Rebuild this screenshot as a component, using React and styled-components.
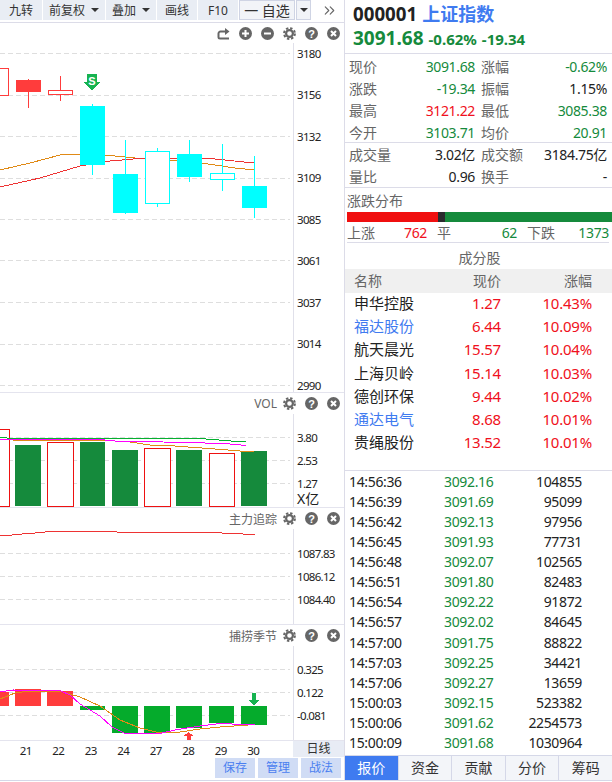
import React from "react";
import styled, { createGlobalStyle } from "styled-components";
import { ChevronsRight } from "lucide-react";

const GlobalStyle = createGlobalStyle`
    html, body {
        margin: 0;
        padding: 0;
        background: #fff;
    }
    body {
        font-family: "Noto Sans", "Noto Sans CJK SC", sans-serif;
        color: #222;
    }
    * {
        box-sizing: border-box;
    }
`;

const GREEN = "#158a3c";
const RED = "#f01020";
const BLUE = "#3f7bf0";
const LINE = "#dcdce8";

const Page = styled.div`
    display: flex;
    width: 612px;
    height: 782px;
    overflow: hidden;
`;

const LeftColumn = styled.div`
    display: flex;
    flex-direction: column;
    width: 345px;
    height: 781px;
    border-right: 1px solid ${LINE};
    border-bottom: 1px solid #d5d8e8;
`;

const Toolbar = styled.div`
    display: flex;
    align-items: flex-start;
    gap: 1px;
    height: 23px;
    flex: none;
    border-bottom: 1px solid ${LINE};
`;

const ToolButton = styled.div`
    display: flex;
    align-items: center;
    justify-content: center;
    gap: 6px;
    width: ${({ $w }) => $w}px;
    height: 20px;
    background: ${({ $outlined }) => ($outlined ? "#f2f4f8" : "#e9edf4")};
    border: ${({ $outlined }) => ($outlined ? "1px solid #cfd4e4" : "none")};
    font-size: ${({ $outlined }) => ($outlined ? 14 : 12)}px;
    color: #333;
    white-space: nowrap;
`;

const Caret = styled.span`
    width: 0;
    height: 0;
    border-left: 4px solid transparent;
    border-right: 4px solid transparent;
    border-top: 4px solid #333;
`;

const MoreButton = styled.div`
    display: flex;
    align-items: center;
    height: 20px;
    margin-left: 9px;
    color: #666;
`;

const Pane = styled.div`
    display: flex;
    flex-direction: column;
    height: ${({ $h }) => $h}px;
    flex: none;
    border-bottom: 1px solid #e4e4ee;
`;

const PaneHeader = styled.div`
    display: flex;
    align-items: center;
    justify-content: flex-end;
    gap: 9px;
    height: ${({ $h }) => $h}px;
    flex: none;
    padding-right: 4px;
`;

const PaneLabel = styled.span`
    font-size: 12px;
    color: #666;
    margin-right: -3px;
`;

const PaneBody = styled.div`
    display: flex;
    flex: 1;
    min-height: 0;
`;

const Plot = styled.svg`
    display: block;
    width: 293px;
    height: 100%;
    flex: none;
    shape-rendering: crispEdges;
`;

const Axis = styled.div`
    flex: 1;
    border-left: 1px solid #e0e0ea;
    padding-left: 3px;
    padding-top: ${({ $pad }) => $pad}px;
`;

const AxisLabel = styled.div`
    height: 14px;
    line-height: 14px;
    margin-bottom: ${({ $step }) => $step - 14}px;
    font-size: 11.5px;
    letter-spacing: -0.7px;
    color: #222;
    white-space: nowrap;
`;

const AxisUnit = styled.div`
    font-size: 14px;
    line-height: 14px;
    margin-top: -7.5px;
    color: #222;
`;

const DateStrip = styled.div`
    display: flex;
    height: 16px;
    flex: none;
`;

const DateTrack = styled.div`
    width: 293px;
    overflow: hidden;
`;

const DateRow = styled.div`
    display: flex;
    margin-left: -23px;
`;

const DateCell = styled.span`
    width: 32.5px;
    flex: none;
    text-align: center;
    font-size: 11.5px;
    line-height: 20px;
    letter-spacing: -0.6px;
    color: #222;
`;

const PeriodTag = styled.div`
    flex: 1;
    background: #e8ecf5;
    text-align: center;
    font-size: 12px;
    line-height: 16px;
    color: #333;
`;

const ActionRow = styled.div`
    display: flex;
    justify-content: flex-end;
    gap: 3px;
    padding: 1px 3px 0 0;
`;

const ActionButton = styled.div`
    width: 40px;
    height: 20px;
    background: #d0dcf5;
    color: #4a80f0;
    font-size: 12px;
    line-height: 20px;
    text-align: center;
`;

const RightColumn = styled.div`
    display: flex;
    flex-direction: column;
    width: 267px;
    flex: none;
`;

const Quote = styled.div`
    height: 54px;
    padding: 1px 0 0 8px;
    border-bottom: 1px solid ${LINE};
`;

const QuoteTitle = styled.div`
    display: flex;
    align-items: center;
    gap: 5px;
    height: 24px;
    font-size: 18.7px;
    font-weight: 700;
`;

const QuoteName = styled.span`
    font-size: 18px;
    color: ${BLUE};
`;

const QuotePrice = styled.div`
    display: flex;
    align-items: baseline;
    gap: 5px;
    color: ${GREEN};
    font-weight: 700;
    font-size: 15px;
    line-height: 26px;
`;

const QuoteBig = styled.span`
    font-size: 19px;
`;

const StatBlock = styled.div`
    height: ${({ $h }) => $h}px;
    padding-top: ${({ $pad }) => $pad}px;
    border-bottom: 1px solid ${LINE};
`;

const StatRow = styled.div`
    display: grid;
    grid-template-columns: 54px 66px 54px 66px;
    column-gap: 6px;
    padding-left: 4px;
    height: 22px;
    line-height: 22px;
    font-size: 14px;
`;

const StatLabel = styled.span`
    color: #666;
    white-space: nowrap;
`;

const StatValue = styled.span`
    text-align: right;
    white-space: nowrap;
    letter-spacing: -0.35px;
    color: ${({ $color }) => $color || "#222"};
`;

const Breadth = styled.div`
    height: 56px;
    padding: 3px 3px 0 2px;
`;

const BreadthTitle = styled.div`
    font-size: 14px;
    line-height: 20px;
    color: #666;
`;

const BreadthBar = styled.div`
    display: flex;
    height: 10px;
    margin: 1px -3px 0 0;
`;

const BreadthPart = styled.div`
    width: ${({ $w }) => $w}px;
    flex: ${({ $grow }) => ($grow ? 1 : "none")};
    background: ${({ $color }) => $color};
`;

const BreadthRow = styled.div`
    display: grid;
    grid-template-columns: 80px 80px 82px;
    column-gap: 10px;
    height: 21px;
    line-height: 22px;
    font-size: 14px;
    border-bottom: 1px solid ${LINE};
`;

const BreadthCell = styled.div`
    display: flex;
    justify-content: space-between;
`;

const SectionTitle = styled.div`
    height: 25px;
    line-height: 28px;
    padding-left: 2px;
    text-align: center;
    font-size: 14px;
    color: #666;
`;

const ConstRow = styled.div`
    display: grid;
    grid-template-columns: 96px 51px 91px;
    height: ${({ $head }) => ($head ? 24 : 23.2)}px;
    line-height: ${({ $head }) => ($head ? 23 : 20)}px;
    padding-left: 9px;
    font-size: ${({ $head }) => ($head ? 14 : 15)}px;
    background: ${({ $head }) => ($head ? "#f0f0f0" : "transparent")};
    color: ${({ $head }) => ($head ? "#666" : "#222")};
`;

const ConstName = styled.span`
    color: ${({ $linked }) => ($linked ? BLUE : "inherit")};
    white-space: nowrap;
`;

const ConstNum = styled.span`
    text-align: right;
    letter-spacing: ${({ $head }) => ($head ? 0 : "-0.2px")};
    color: ${({ $head }) => ($head ? "inherit" : RED)};
`;

const ConstTable = styled.div`
    height: 202px;
    border-bottom: 1px solid ${LINE};
`;

const TickList = styled.div`
    flex: 1;
    min-height: 0;
    padding: 1px 0 0 4px;
`;

const TickRow = styled.div`
    display: grid;
    grid-template-columns: 95px 60px 78px;
    height: 20.07px;
    line-height: 20px;
    font-size: 14px;
    letter-spacing: -0.35px;
`;

const TickPrice = styled.span`
    color: ${GREEN};
`;

const TickVolume = styled.span`
    text-align: right;
`;

const Tabs = styled.div`
    display: flex;
    height: 26px;
    flex: none;
    margin-bottom: 1px;
    border-top: 1px solid #d5d8e8;
    border-bottom: 1px solid #d5d8e8;
`;

const Tab = styled.div`
    flex: 1;
    text-align: center;
    font-size: 14px;
    line-height: 24px;
    background: ${({ $active }) => ($active ? BLUE : "#f3f5f9")};
    color: ${({ $active }) => ($active ? "#fff" : "#333")};
    border-right: 1px solid #d5d8e8;
    &:last-child {
        border-right: none;
    }
`;

const ICON = "#666";

const Disc = ({ children }) => (
    <svg width="13" height="13" viewBox="0 0 13 13">
        <circle cx="6.5" cy="6.5" r="6.5" fill={ICON} />
        {children}
    </svg>
);

const PlusIcon = () => (
    <Disc>
        <path d="M3 6.5h7M6.5 3v7" stroke="#fff" strokeWidth="2" />
    </Disc>
);

const MinusIcon = () => (
    <Disc>
        <path d="M3 6.5h7" stroke="#fff" strokeWidth="2" />
    </Disc>
);

const HelpIcon = () => (
    <Disc>
        <text x="6.5" y="10.5" textAnchor="middle" fontSize="11" fontWeight="700" fill="#fff" fontFamily="Liberation Sans">
            ?
        </text>
    </Disc>
);

const CloseIcon = () => (
    <Disc>
        <path d="M4 4l5 5M9 4l-5 5" stroke="#fff" strokeWidth="2" />
    </Disc>
);

const GearIcon = () => (
    <svg width="13" height="13" viewBox="0 0 13 13">
        <circle cx="6.5" cy="6.5" r="3.4" fill="none" stroke={ICON} strokeWidth="2.2" />
        <circle cx="6.5" cy="6.5" r="5.4" fill="none" stroke={ICON} strokeWidth="2" strokeDasharray="2.4 1.84" />
    </svg>
);

const ShareIcon = () => (
    <svg width="13" height="13" viewBox="0 0 13 13">
        <path d="M12 11.5H3a1.5 1.5 0 0 1-1.5-1.5V6.5A2 2 0 0 1 3.5 4.5H8" fill="none" stroke={ICON} strokeWidth="2" />
        <path d="M8 1l4.5 3.5L8 8z" fill={ICON} />
    </svg>
);

const PaneIcons = () => (
    <>
        <GearIcon />
        <HelpIcon />
        <CloseIcon />
    </>
);

const Grid = ({ ys }) =>
    ys.map((y) => <line key={y} x1="0" x2="290" y1={y} y2={y} stroke="#dedede" strokeWidth="1" strokeDasharray="5 3" />);

const Poly = ({ points, color, width = 1 }) => (
    <polyline points={points.map((p) => p.join(",")).join(" ")} fill="none" stroke={color} strokeWidth={width} />
);

const CYAN = "#00ffff";
const CANDLE_RED = "#ff3c3c";

// x, width, body top, body bottom, wick top, wick bottom
const candles = [
    { x: -16, w: 24, t: 68.5, b: 95.5, hollow: true, c: CANDLE_RED },
    { x: 16, w: 25, t: 80, b: 92, wt: 79, wb: 108, c: CANDLE_RED },
    { x: 48.5, w: 24, t: 90.5, b: 94, wt: 76, wb: 101, hollow: true, c: CANDLE_RED },
    { x: 80, w: 25, t: 106, b: 165, wt: 104, wb: 175, c: CYAN },
    { x: 113, w: 25, t: 174, b: 213, wt: 140, wb: 214, c: CYAN },
    { x: 145.5, w: 24, t: 151.5, b: 203, wt: 148, wb: 207, hollow: true, c: CYAN },
    { x: 177, w: 25, t: 154, b: 177, wt: 140, wb: 182, c: CYAN },
    { x: 210.5, w: 24, t: 173.5, b: 179, wt: 144, wb: 191, hollow: true, c: CYAN },
    { x: 242, w: 25, t: 186, b: 208, wt: 156, wb: 218, c: CYAN },
];

const Candle = ({ x, w, t, b, wt, wb, hollow, c }) => {
    const mid = x + w / 2;
    return (
        <g>
            {wt !== undefined && <line x1={mid} x2={mid} y1={wt} y2={wb} stroke={c} strokeWidth="1" />}
            <rect x={x} y={t} width={w} height={b - t} fill={hollow ? "#fff" : c} stroke={hollow ? c : "none"} strokeWidth="1" />
        </g>
    );
};

const volumes = [
    { x: -16, w: 25, t: 429.5, hollow: true },
    { x: 15, w: 26, t: 445 },
    { x: 47.5, w: 26, t: 442.5, hollow: true },
    { x: 80, w: 25, t: 442 },
    { x: 112, w: 26, t: 450 },
    { x: 144.5, w: 26, t: 448.5, hollow: true },
    { x: 176, w: 26, t: 450 },
    { x: 209.5, w: 25, t: 453.5, hollow: true },
    { x: 241, w: 26, t: 451 },
];

const seasonBars = [
    { x: -16, w: 25, t: 691.5, b: 706, c: CANDLE_RED },
    { x: 15, w: 26, t: 689, b: 706, c: CANDLE_RED },
    { x: 47, w: 26, t: 691, b: 706, c: CANDLE_RED },
    { x: 80, w: 25, t: 706, b: 710, c: "#05ab2c" },
    { x: 112, w: 26, t: 706, b: 733, c: "#05ab2c" },
    { x: 144, w: 26, t: 706, b: 733, c: "#05ab2c" },
    { x: 176, w: 26, t: 706, b: 728, c: "#05ab2c" },
    { x: 209, w: 25, t: 706, b: 723, c: "#05ab2c" },
    { x: 241, w: 26, t: 706, b: 725, c: "#05ab2c" },
];

const stats = [
    ["现价", "3091.68", GREEN, "涨幅", "-0.62%", GREEN],
    ["涨跌", "-19.34", GREEN, "振幅", "1.15%", "#222"],
    ["最高", "3121.22", RED, "最低", "3085.38", GREEN],
    ["今开", "3103.71", GREEN, "均价", "20.91", GREEN],
];

const constituents = [
    ["申华控股", "1.27", "10.43%"],
    ["福达股份", "6.44", "10.09%", true],
    ["航天晨光", "15.57", "10.04%"],
    ["上海贝岭", "15.14", "10.03%"],
    ["德创环保", "9.44", "10.02%"],
    ["通达电气", "8.68", "10.01%", true],
    ["贵绳股份", "13.52", "10.01%"],
];

const ticks = [
    ["14:56:36", "3092.16", "104855"],
    ["14:56:39", "3091.69", "95099"],
    ["14:56:42", "3092.13", "97956"],
    ["14:56:45", "3091.93", "77731"],
    ["14:56:48", "3092.07", "102565"],
    ["14:56:51", "3091.80", "82483"],
    ["14:56:54", "3092.22", "91872"],
    ["14:56:57", "3092.02", "84645"],
    ["14:57:00", "3091.75", "88822"],
    ["14:57:03", "3092.25", "34421"],
    ["14:57:06", "3092.27", "13659"],
    ["15:00:03", "3092.15", "523382"],
    ["15:00:06", "3091.62", "2254573"],
    ["15:00:09", "3091.68", "1030964"],
];

const App = () => (
    <Page>
        <GlobalStyle />
        <LeftColumn>
            <Toolbar>
                <ToolButton $w={42}>九转</ToolButton>
                <ToolButton $w={62}>前复权<Caret /></ToolButton>
                <ToolButton $w={50}>叠加<Caret /></ToolButton>
                <ToolButton $w={40}>画线</ToolButton>
                <ToolButton $w={40}>F10</ToolButton>
                <ToolButton $w={56} $outlined>一 自选</ToolButton>
                <ToolButton $w={15} $outlined><Caret /></ToolButton>
                <MoreButton><ChevronsRight size={17} strokeWidth={1.6} /></MoreButton>
            </Toolbar>

            <Pane $h={370}>
                <PaneHeader $h={20}>
                    <ShareIcon />
                    <PlusIcon />
                    <MinusIcon />
                    <PaneIcons />
                </PaneHeader>
                <PaneBody>
                    <Plot viewBox="0 43 293 349">
                        <Grid ys={[53.5, 95.5, 136.5, 178.5, 219.5, 260.5, 302.5, 344.5, 385.5]} />
                        <Poly color="#e08a16" points={[[0, 170], [30, 163], [60, 155], [80, 154], [105, 155], [135, 158], [150, 159], [170, 160], [205, 163.5], [235, 168], [254, 170]]} />
                        <Poly color="#ee3333" points={[[0, 187], [40, 178], [80, 166], [110, 161], [145, 158], [170, 158], [210, 158.5], [254, 163]]} />
                        {candles.map((c) => <Candle key={c.x} {...c} />)}
                        <path d="M87 74h10v8h4l-9 8-9-8h4z" fill="#16b350" />
                        <text x="92" y="84.5" textAnchor="middle" fontSize="11" fontWeight="700" fill="#fff" fontFamily="Liberation Sans">S</text>
                    </Plot>
                    <Axis $pad={3.5}>
                        {["3180", "3156", "3132", "3109", "3085", "3061", "3037", "3014", "2990"].map((v) => (
                            <AxisLabel key={v} $step={41.5}>{v}</AxisLabel>
                        ))}
                    </Axis>
                </PaneBody>
            </Pane>

            <Pane $h={115}>
                <PaneHeader $h={21}>
                    <PaneLabel>VOL</PaneLabel>
                    <PaneIcons />
                </PaneHeader>
                <PaneBody>
                    <Plot viewBox="0 414 293 93">
                        <Grid ys={[437.5, 460.5, 483.5]} />
                        {volumes.map((v) => (
                            <rect key={v.x} x={v.x} y={v.t} width={v.w} height={506 - v.t} fill={v.hollow ? "#fff" : GREEN} stroke={v.hollow ? "#ee1111" : "none"} strokeWidth="1" />
                        ))}
                        <Poly color="#05b030" points={[[0, 437.5], [13, 438.5], [100, 438.5], [205, 438.5], [207, 439.5], [230, 440.5], [232, 441.5], [246, 441.5]]} />
                        <Poly color="#e08a16" points={[[13, 440.5], [100, 440], [130, 442], [150, 445], [175, 446], [195, 447.5], [215, 449], [240, 451], [254, 452]]} />
                        <Poly color="#ff00ff" points={[[0, 439.5], [13, 440], [100, 439.5], [115, 441], [140, 441], [175, 442.5], [205, 443], [230, 444], [246, 445.5]]} />
                    </Plot>
                    <Axis $pad={16.5}>
                        {["3.80", "2.53", "1.27"].map((v) => (
                            <AxisLabel key={v} $step={23}>{v}</AxisLabel>
                        ))}
                        <AxisUnit>X亿</AxisUnit>
                    </Axis>
                </PaneBody>
            </Pane>

            <Pane $h={117}>
                <PaneHeader $h={21}>
                    <PaneLabel>主力追踪</PaneLabel>
                    <PaneIcons />
                </PaneHeader>
                <PaneBody>
                    <Plot viewBox="0 529 293 95">
                        <Grid ys={[553.5, 576.5, 599.5]} />
                        <Poly color="#ee3333" points={[[0, 536], [12, 535], [22, 534], [35, 533], [55, 531], [100, 531], [117, 532], [142, 532], [205, 532], [230, 533.5], [255, 534.5]]} />
                    </Plot>
                    <Axis $pad={17.5}>
                        {["1087.83", "1086.12", "1084.40"].map((v) => (
                            <AxisLabel key={v} $step={23}>{v}</AxisLabel>
                        ))}
                    </Axis>
                </PaneBody>
            </Pane>

            <Pane $h={116}>
                <PaneHeader $h={21}>
                    <PaneLabel>捕捞季节</PaneLabel>
                    <PaneIcons />
                </PaneHeader>
                <PaneBody>
                    <Plot viewBox="0 646 293 94">
                        <Grid ys={[669.5, 692.5, 715.5]} />
                        {seasonBars.map((b) => (
                            <rect key={b.x} x={b.x} y={b.t} width={b.w} height={b.b - b.t} fill={b.c} />
                        ))}
                        <Poly color="#e08a16" points={[[0, 699], [15, 693], [30, 691], [60, 691], [80, 697], [100, 706], [120, 720], [140, 728], [160, 733], [180, 732], [200, 729], [220, 727], [255, 724.5]]} />
                        <Poly color="#ff00ff" points={[[0, 692], [13, 690], [60, 690.5], [70, 695], [80, 704], [100, 716], [112, 727], [125, 733.5], [160, 733.5], [175, 730], [200, 726], [220, 723.5], [255, 725]]} />
                        <path d="M188.5 732l5 4h-3v3.5h-4V736h-3z" fill="#ff3c3c" />
                        <path d="M251.5 693h4v7h3.5l-5.5 5.5-5.5-5.5h3.5z" fill="#16b350" />
                    </Plot>
                    <Axis $pad={16.5}>
                        {["0.325", "0.122", "-0.081"].map((v) => (
                            <AxisLabel key={v} $step={23}>{v}</AxisLabel>
                        ))}
                    </Axis>
                </PaneBody>
            </Pane>

            <DateStrip>
                <DateTrack>
                    <DateRow>
                        {["20", "21", "22", "23", "24", "27", "28", "29", "30"].map((d) => (
                            <DateCell key={d}>{d}</DateCell>
                        ))}
                    </DateRow>
                </DateTrack>
                <PeriodTag>日线</PeriodTag>
            </DateStrip>
            <ActionRow>
                <ActionButton>保存</ActionButton>
                <ActionButton>管理</ActionButton>
                <ActionButton>战法</ActionButton>
            </ActionRow>
        </LeftColumn>

        <RightColumn>
            <Quote>
                <QuoteTitle>000001<QuoteName>上证指数</QuoteName></QuoteTitle>
                <QuotePrice>
                    <QuoteBig>3091.68</QuoteBig>
                    <span>-0.62%</span>
                    <span>-19.34</span>
                </QuotePrice>
            </Quote>

            <StatBlock $h={89} $pad={2}>
                {stats.map(([l1, v1, c1, l2, v2, c2]) => (
                    <StatRow key={l1}>
                        <StatLabel>{l1}</StatLabel>
                        <StatValue $color={c1}>{v1}</StatValue>
                        <StatLabel>{l2}</StatLabel>
                        <StatValue $color={c2}>{v2}</StatValue>
                    </StatRow>
                ))}
            </StatBlock>

            <StatBlock $h={45} $pad={1}>
                <StatRow>
                    <StatLabel>成交量</StatLabel>
                    <StatValue>3.02亿</StatValue>
                    <StatLabel>成交额</StatLabel>
                    <StatValue>3184.75亿</StatValue>
                </StatRow>
                <StatRow>
                    <StatLabel>量比</StatLabel>
                    <StatValue>0.96</StatValue>
                    <StatLabel>换手</StatLabel>
                    <StatValue>-</StatValue>
                </StatRow>
            </StatBlock>

            <Breadth>
                <BreadthTitle>涨跌分布</BreadthTitle>
                <BreadthBar>
                    <BreadthPart $w={91} $color="#f00f0f" />
                    <BreadthPart $w={7} $color="#2a2a2e" />
                    <BreadthPart $grow $color={GREEN} />
                </BreadthBar>
                <BreadthRow>
                    <BreadthCell><StatLabel>上涨</StatLabel><StatValue $color={RED}>762</StatValue></BreadthCell>
                    <BreadthCell><StatLabel>平</StatLabel><StatValue $color={GREEN}>62</StatValue></BreadthCell>
                    <BreadthCell><StatLabel>下跌</StatLabel><StatValue $color={GREEN}>1373</StatValue></BreadthCell>
                </BreadthRow>
            </Breadth>

            <SectionTitle>成分股</SectionTitle>
            <ConstTable>
                <ConstRow $head>
                    <span>名称</span>
                    <ConstNum $head>现价</ConstNum>
                    <ConstNum $head>涨幅</ConstNum>
                </ConstRow>
                {constituents.map(([name, price, pct, linked]) => (
                    <ConstRow key={name}>
                        <ConstName $linked={linked}>{name}</ConstName>
                        <ConstNum>{price}</ConstNum>
                        <ConstNum>{pct}</ConstNum>
                    </ConstRow>
                ))}
            </ConstTable>

            <TickList>
                {ticks.map(([time, price, volume]) => (
                    <TickRow key={time}>
                        <span>{time}</span>
                        <TickPrice>{price}</TickPrice>
                        <TickVolume>{volume}</TickVolume>
                    </TickRow>
                ))}
            </TickList>

            <Tabs>
                <Tab $active>报价</Tab>
                <Tab>资金</Tab>
                <Tab>贡献</Tab>
                <Tab>分价</Tab>
                <Tab>筹码</Tab>
            </Tabs>
        </RightColumn>
    </Page>
);

export default App;
